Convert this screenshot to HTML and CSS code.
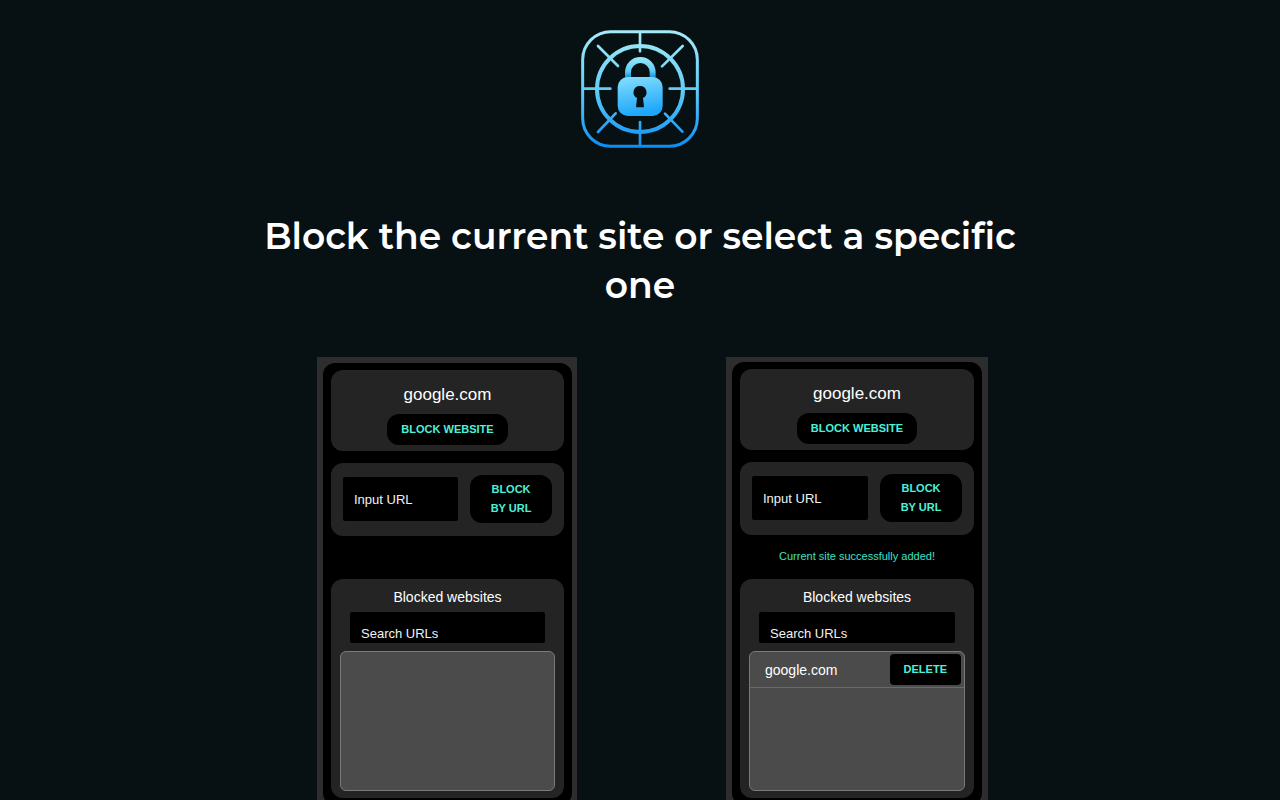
FILE: index.html
```html
<!DOCTYPE html>
<html lang="en">
<head>
    <meta charset="UTF-8">
    <meta name="viewport" content="width=device-width, initial-scale=1.0">
    <title>Site Blocker</title>
    <link rel="stylesheet" href="styles.css">
</head>
<body>
    <header class="header">
        <svg class="logo" viewBox="30 27 360 360" fill="none" stroke="url(#logoGradient)" stroke-linecap="round" role="img" aria-label="Site Blocker logo">
            <defs>
                <linearGradient id="logoGradient" gradientUnits="userSpaceOnUse" x1="0" y1="30" x2="0" y2="382">
                    <stop offset="0" stop-color="#a5edf6"/>
                    <stop offset="0.5" stop-color="#62cef8"/>
                    <stop offset="1" stop-color="#0b8ff5"/>
                </linearGradient>
                <linearGradient id="shackleGradient" gradientUnits="userSpaceOnUse" x1="0" y1="110" x2="0" y2="172">
                    <stop offset="0" stop-color="#9aeaf8"/>
                    <stop offset="0.7" stop-color="#5fcbf5"/>
                    <stop offset="1" stop-color="#168fd8"/>
                </linearGradient>
                <linearGradient id="lockGradient" x1="0" y1="0" x2="0.2" y2="1">
                    <stop offset="0" stop-color="#85e0fb"/>
                    <stop offset="1" stop-color="#1ea6fb"/>
                </linearGradient>
            </defs>
            <rect x="38" y="35" width="344" height="344" rx="84" stroke-width="9"/>
            <circle cx="210" cy="207" r="129" stroke-width="12"/>
            <path stroke-width="8" d="M210.1 36 210 94M210.1 306 210 376M40 206.1 121 206M299 206.1 380 206M84 78 144 138M338 78 276 139M84 336 137 280M337 335 285 281"/>
            <path d="M174 174V157a37 37 0 0 1 74 0v17" stroke="url(#shackleGradient)" stroke-width="18" stroke-linecap="butt"/>
            <rect x="143" y="171" width="135" height="117" rx="30" fill="url(#lockGradient)" stroke="none"/>
            <path d="M210 198a19 19 0 0 1 9 36l3 28h-24l3-28a19 19 0 0 1 9-36z" fill="#071013" stroke="none"/>
        </svg>
    </header>

    <main class="content">
        <h1 class="title">Block the current site or select a specific one</h1>

        <div class="previews">
            <!-- Popup before blocking -->
            <section class="popup popup-before">
                <div class="popup-screen">
                    <div class="card site-card">
                        <p class="site-name">google.com</p>
                        <button class="btn" type="button">BLOCK WEBSITE</button>
                    </div>
                    <div class="card url-card">
                        <input class="field url-field" type="text" placeholder="Input URL" aria-label="Input URL">
                        <button class="btn url-btn" type="button">BLOCK<br>BY URL</button>
                    </div>
                    <p class="message"></p>
                    <div class="card list-card">
                        <h2 class="list-title">Blocked websites</h2>
                        <input class="field search-field" type="text" placeholder="Search URLs" aria-label="Search URLs">
                        <ul class="site-list"></ul>
                    </div>
                </div>
            </section>

            <!-- Popup after blocking -->
            <section class="popup popup-after">
                <div class="popup-screen">
                    <div class="card site-card">
                        <p class="site-name">google.com</p>
                        <button class="btn" type="button">BLOCK WEBSITE</button>
                    </div>
                    <div class="card url-card">
                        <input class="field url-field" type="text" placeholder="Input URL" aria-label="Input URL">
                        <button class="btn url-btn" type="button">BLOCK<br>BY URL</button>
                    </div>
                    <p class="message">Current site successfully added!</p>
                    <div class="card list-card">
                        <h2 class="list-title">Blocked websites</h2>
                        <input class="field search-field" type="text" placeholder="Search URLs" aria-label="Search URLs">
                        <ul class="site-list">
                            <li class="site-item">
                                <span>google.com</span>
                                <button class="btn delete-btn" type="button">DELETE</button>
                            </li>
                        </ul>
                    </div>
                </div>
            </section>
        </div>
    </main>
</body>
</html>
```

FILE: styles.css
```css
* {
    box-sizing: border-box;
    margin: 0;
    padding: 0;
}

body {
    background-color: #071013;
    color: #fff;
    font-family: "Liberation Sans", Arial, sans-serif;
}

.header {
    display: flex;
    justify-content: center;
    padding-top: 29px;
}

.logo {
    width: 120px;
    height: 120px;
}

.content {
    padding: 63px 20px 40px;
}

.title {
    max-width: 800px;
    margin: 0 auto 47px;
    font-family: Montserrat, Inter, sans-serif;
    font-size: 36px;
    font-weight: 600;
    line-height: 49px;
    text-align: center;
}

/* Extension popups */
.previews {
    display: flex;
    flex-wrap: wrap;
    justify-content: center;
    align-items: flex-start;
    gap: 40px 149px;
    padding-left: 25px;
}

.popup {
    background: #2d2d2d;
}

.popup-before {
    width: 260px;
    padding: 6px 5px 6px 6px;
}

.popup-after {
    width: 262px;
    padding: 5px 6px;
}

.popup-screen {
    padding: 7px 8px;
    border-radius: 12px;
    background: #000;
}

.card {
    border-radius: 12px;
    background: #242424;
}

.btn {
    padding: 6px 14px;
    border: none;
    border-radius: 12px;
    background: #000;
    color: #4df0d8;
    font-family: inherit;
    font-size: 11px;
    font-weight: bold;
    line-height: 19px;
    cursor: pointer;
}

.field {
    border: none;
    border-radius: 2px;
    background: #000;
    color: #fff;
    font-family: inherit;
    font-size: 13px;
}

.field::placeholder {
    color: #f2f2f2;
}

.site-card {
    display: flex;
    flex-direction: column;
    align-items: center;
    gap: 8px;
    padding: 14px 12px 6px;
}

.site-name {
    font-size: 17px;
    line-height: 22px;
}

.url-card {
    display: flex;
    align-items: center;
    gap: 12px;
    margin-top: 12px;
    padding: 12px 12px 13px;
}

.url-field {
    flex: 1;
    min-width: 0;
    height: 44px;
    padding: 0 11px;
}

.url-btn {
    width: 82px;
    padding: 5px 0;
}

.message {
    height: 43px;
    color: #3fe0c5;
    font-size: 11px;
    line-height: 42px;
    text-align: center;
}

.popup-after .message {
    height: 44px;
}

.list-card {
    display: flex;
    flex-direction: column;
    padding: 7px 9px;
}

.list-title {
    margin-bottom: 4px;
    font-size: 14px;
    font-weight: normal;
    line-height: 22px;
    text-align: center;
}

.search-field {
    height: 31px;
    margin: 0 10px 8px;
    padding: 12px 11px 0;
}

.site-list {
    height: 140px;
    border: 1px solid #7a7a7a;
    border-radius: 6px;
    background: #4b4b4b;
    list-style: none;
}

.site-item {
    display: flex;
    justify-content: space-between;
    align-items: center;
    padding: 2px 3px 2px 15px;
    border-bottom: 1px solid #6a6a6a;
    font-size: 14px;
}

.delete-btn {
    border-radius: 4px;
}
```
